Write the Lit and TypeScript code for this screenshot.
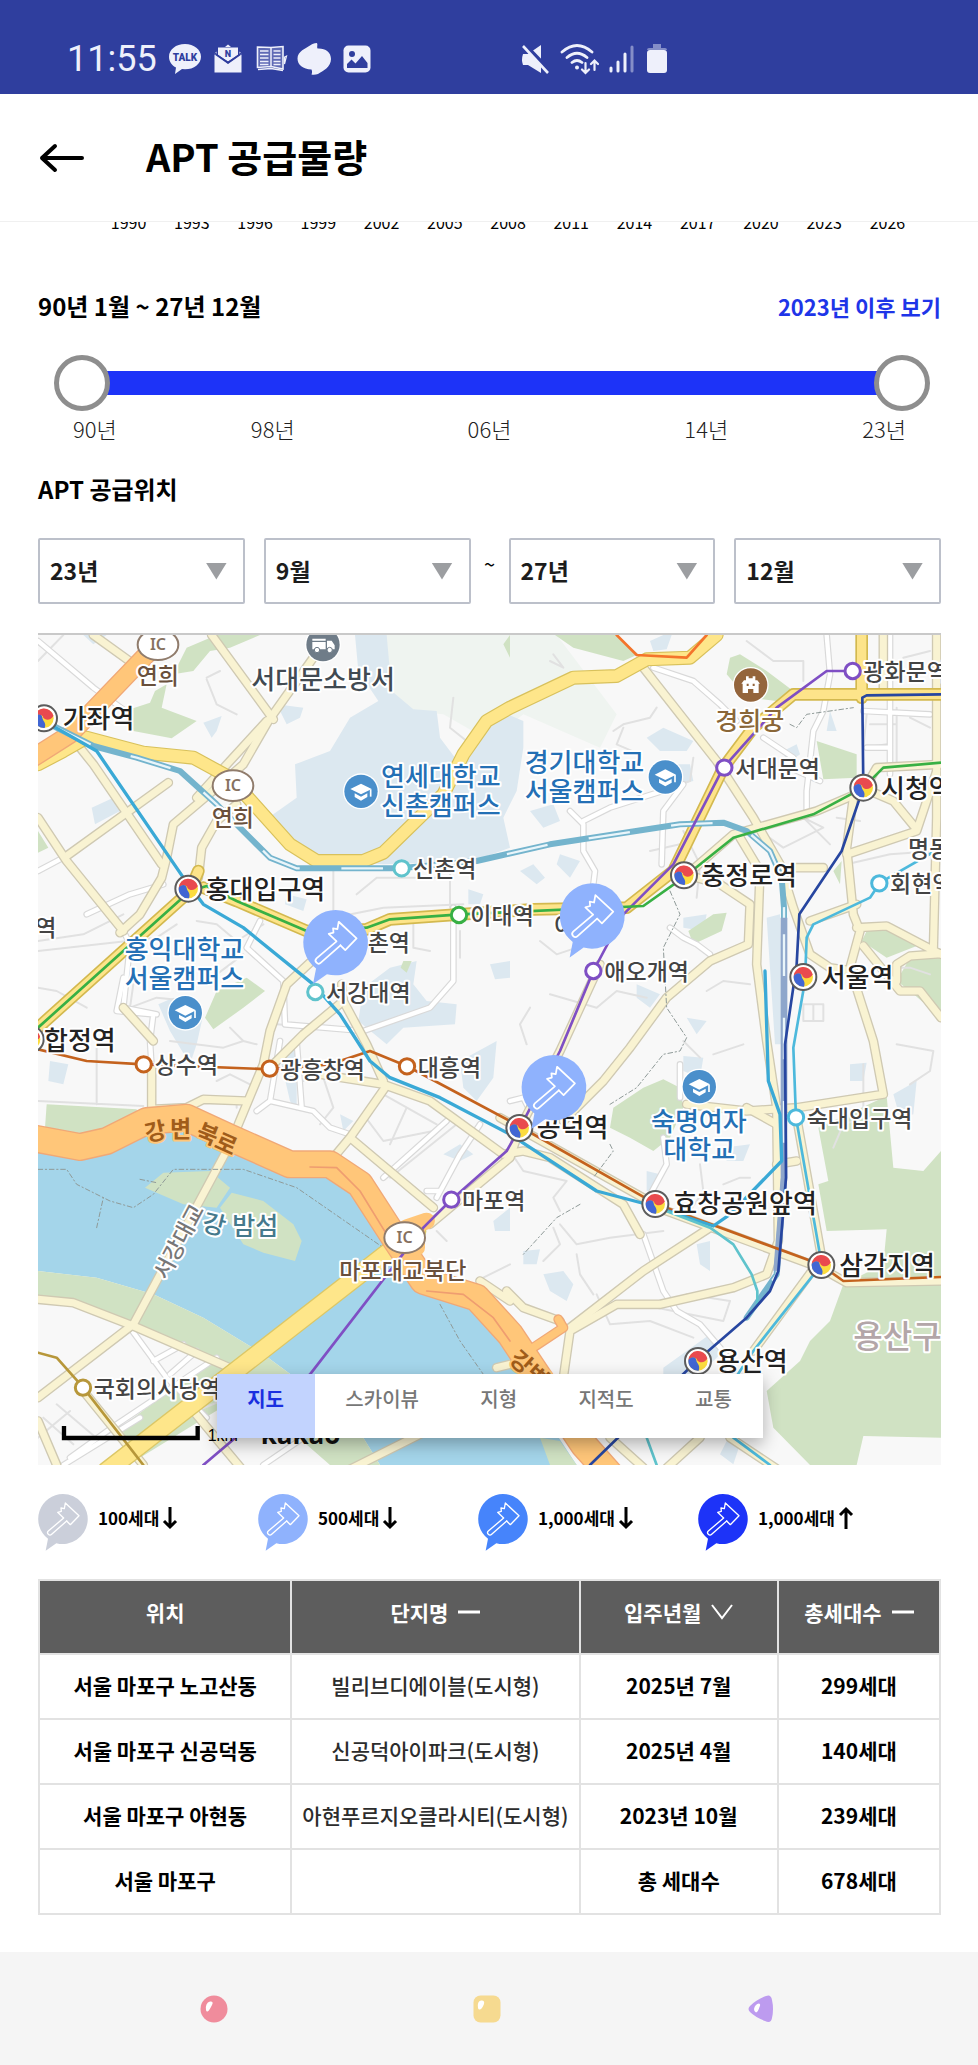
import { LitElement, html, svg, css } from "lit";
import { customElement, property, state } from "lit/decorators.js";
import { classMap } from "lit/directives/class-map.js";

/* ---------- shared shapes ---------- */

const pinShape = (fill: string) => svg`
  <path d="M75 0a75 75 0 1 1 -20 147.500L23 170L30 134.500A75 75 0 0 1 75 0Z" fill=${fill}></path>
  <g fill="none" stroke="#fff" stroke-width="4" stroke-linejoin="round" stroke-linecap="round">
    <path d="M77 72L31 111a7 7 0 0 0 10 10L86 81"></path>
    <path d="M76 71L59 55L70 52L69 42L79 44L82 27L123 65L97 92L86 81"></path>
  </g>`;

@customElement("supply-pin")
class SupplyPin extends LitElement {
  static styles = css`
    :host { display: block; width: 50px; }
    svg { display: block; width: 100%; height: auto; }
  `;
  @property() color = "#8fb2fd";
  render() {
    return html`<svg viewBox="0 0 150 171" aria-hidden="true">${pinShape(this.color)}</svg>`;
  }
}

/* ---------- map ---------- */

type Road = [kind: string, d: string];

const areas: Road[] = [
  ["mist", "M1060 12H1580L1760 250L1710 350L1480 250L1380 330L1240 250L1090 235Z"],
  ["campus", "M975 12H1070L1085 180L1150 235L1220 240L1230 320L1290 400L1370 300L1410 240L1480 270L1480 350L1460 480L1420 560L1440 650L1330 690L1060 700L900 690L800 640L715 560L800 500L795 400L900 360L960 260L1045 210L985 120Z"],
  ["campus", "M740 220L820 230L810 260L770 280ZM520 275L575 255L560 300L545 320ZM185 530L250 500L270 540L195 580ZM160 12H230L190 40ZM770 790L830 805L820 840L765 820ZM1315 775L1360 790L1350 820H1315ZM1000 1070L1080 1010L1160 990L1150 1060L1190 1110L1280 1120L1275 1180L1120 1190L1070 1240L985 1170ZM385 1120L430 1100L520 1150L500 1240L480 1300L420 1200ZM1380 1000L1440 990V1040L1395 1045Z"],
  ["campus", "M1860 30L1900 12H1925L1910 55L1870 60ZM1850 320L1900 290L1990 330L1970 360H1890ZM1940 400H1980L1990 450L1950 460ZM2260 360L2300 340L2310 370L2270 400ZM1580 700L1590 670L1650 690L1620 740ZM1470 720L1510 700L1545 740L1520 760ZM1500 540L1570 520L1590 570L1540 590ZM1960 860L2030 850L2020 900L1960 890ZM1820 1060L1890 1090L1860 1130L1820 1100ZM1970 1160L2030 1170L2000 1210ZM2400 240L2420 300L2390 300ZM2210 860L2250 850L2262 1240H2235ZM2590 1390L2660 1350L2650 1450L2610 1460ZM2460 1300L2510 1295L2500 1350H2460ZM1960 1275L2020 1280L2010 1340L1960 1320ZM1540 1930L1600 1920L1630 1960L1610 2010L1560 1980ZM2000 1840L2040 1830L2040 1920L2010 1900ZM1480 1860L1530 1855L1520 1900H1480ZM1900 2210L2040 2110L2080 2160L2000 2240H1900ZM1850 1620L1890 1630L1880 1680H1850Z"],
  ["campus", "M60 1290L115 1300L100 1360L55 1350ZM750 1280L800 1250L800 1440L780 1410ZM1240 1570L1290 1540L1330 1570L1290 1590ZM1390 1770L1440 1730V1800H1395ZM1290 1290L1400 1230L1390 1340L1340 1410L1300 1370ZM930 1450L970 1470L940 1500ZM2080 1550L2160 1540L2140 1590L2090 1590ZM2090 2430L2130 2440L2110 2500L2070 2470Z"],
  ["park", "M430 130L470 50L560 12H690L600 50L540 60L490 120ZM360 215L375 180L410 160L395 230L500 270L425 322L310 300L300 235ZM24 600L55 650L24 665ZM560 1080L650 1040L705 1080L640 1130L550 1195L525 1160ZM1120 990L1145 990L1130 1025L1112 1010ZM1440 12L1420 40L1440 80Z"],
  ["park", "M1575 12H1760L1825 70L1780 90L1630 50ZM2100 80L2130 70L2210 120L2290 180L2240 210L2150 200L2090 130ZM2360 330L2480 370V440L2380 445ZM2050 850L2090 845L2075 900L1990 940L1975 900ZM2510 900L2570 895L2660 945L2570 980L2495 930ZM2600 1050L2640 980L2733 975V1160L2640 1080ZM2410 720L2435 690L2430 760Z"],
  ["park", "M2365 1490L2570 1395L2590 1610L2680 1620L2733 1560V2420L2500 2415L2480 2502H2340L2230 2390L2210 2280L2310 2190L2340 2130L2400 2070L2440 1960L2560 1900L2570 1795L2390 1800L2365 1660L2395 1650ZM1840 1370L1900 1345L1950 1370L1960 1430L1920 1520L1870 1560L1800 1520L1740 1490L1750 1430Z"],
  ["park", "M50 1420L320 1435L330 1500L200 1540L45 1490Z"],
  ["water", "M24 1540L150 1585L330 1500H500L600 1560L780 1620L920 1620L1060 1840L1150 1960L1340 2030L1440 2160L1560 2380L1640 2502H1050L1000 2420L850 2280L700 2170L520 2060L370 1990L200 1940L24 1920Z"],
  ["park", "M24 1920L200 1940L370 1990L520 2060L700 2170L850 2280L1000 2420L1050 2502H900L760 2380L600 2210L400 2110L200 2030L24 2000Z"],
  ["park", "M270 2390L540 2190L610 2200L640 2290L330 2480ZM1530 2420L1560 2502H1640L1590 2430Z"],
  ["park", "M345 1670L400 1625L540 1620L600 1670L560 1730L460 1720ZM570 1730L605 1685L700 1710L790 1780L815 1830L795 1890L700 1865L640 1840Z"],
];

const lanes = [
  "M24 90L100 12M70 70L24 40M530 140L570 120M530 145L560 220L620 250M1270 200L1260 290L1310 330M910 700V860M1260 710V830M910 860L1060 830L1300 820M980 790L1040 740H1260M1150 860V950L1200 960M1290 900V980",
  "M24 930L160 910L280 850M500 870L560 880L620 930L700 880M440 880L380 920L24 960M310 1060L300 1130L380 1100L480 1110M24 1070L80 1080L170 1130M520 1060L640 970M600 1190L640 1230L680 1240M740 1180L880 1190",
  "M1750 300L1780 280L1860 260L1880 230M1780 290L1760 340L1830 370M1990 380L1980 450L1900 480M1960 600L2010 700L2000 800M1860 660L1950 640M2190 600L2260 650L2380 590L2320 560L2400 640M2150 30L2230 90H2320V150M1570 70L1600 110L1560 90",
  "M1530 930L1580 970L1640 950M1560 1090L1700 1130L1760 1080L1850 1100M1500 1130L1470 1180L1490 1240M2030 1080L2080 1050L2160 1060M2320 1120H2380V1170H2320ZM2350 1120V1170M2540 1040L2600 1010L2640 1010L2700 1030",
  "M420 1230L580 1250L640 1230M200 1250V1420M24 1410L340 1425M560 1350L600 1330L660 1360M620 1400V1430M820 1350L850 1300M880 1340L910 1430L870 1480M1000 1450L1060 1530L1210 1500M1060 1390L1220 1480M1080 1540L1130 1430M1080 1640L1280 1480M1220 1800L1250 1830M1360 1940L1440 1900",
  "M1440 1560L1480 1620L1610 1650L1570 1700L1590 1740M1590 1780L1640 1840L1740 1820L1900 1800M1540 1890L1590 1840L1570 1790M1640 1870L1650 1930L1690 1990M1700 1990L1740 2080L1860 2070L1990 2120M1880 2030L2080 2070L2100 2010L1970 1990M2010 1600L2020 1680L1980 1740M2080 1660L2130 1640H2160",
  "M2410 1550L2440 1480L2500 1460V1300M2600 1240L2710 1260L2700 1320L2640 1360M2050 1270L2140 1240M2010 1280L1960 1230M40 2360L130 2440M24 2420L120 2340M80 2320L210 2430M330 2470L420 2400M500 2340L620 2290",
  "M2510 250L2500 350L2570 340M2600 230V400M2520 280H2600M2540 130L2600 100M2640 260L2700 290M2620 80L2700 60M2450 700L2580 670L2720 660M2420 560L2490 570",
];

const streets: string[] = [
  "M24 30L190 170L300 250", "M24 720L100 680", "M170 850L300 790L400 760M280 900L300 940L280 1130L380 1150",
  "M690 870L650 950L760 1050L765 1180L1000 1200L1200 1130L1270 1050V830",
  "M280 1040L260 1140L370 1150L360 1230L365 1310", "M750 1230L720 1410L680 1440M800 1230L815 1430M720 1410L850 1440L900 1490L960 1510",
  "M1060 1640L1250 1470M1220 1700L1290 1570L1350 1480M1230 1680L1190 1680",
  "M1870 110L1990 150L2070 220L2120 270M2200 320L2290 380L2280 410L2370 450M2390 12L2400 130L2380 240L2350 300L2330 480V540",
  "M1620 540L1660 580L1660 660L1695 720L1690 760M1660 570L1740 530L1960 460L1930 500L1900 540L1895 700",
  "M2580 12V430M2500 240L2700 250M2510 350H2580", "M1920 890L1960 920L2000 940L2040 970",
  "M1850 1710L1910 1600L1900 1520M1840 1810L1900 1980L1940 2040L2010 2080L2070 2150L2110 2200",
  "M1440 1410L1480 1400L1500 1440", "M300 2090L410 2240L530 2360M370 2190L460 2140M420 2230L500 2160M120 2480L260 2380L560 2180M100 2502L330 2360",
  "M1950 1400L1950 1300M700 2502L820 2420",
];

const avenues: string[] = [
  "M190 12L305 95", "M545 12L730 265", "M850 80L715 270L640 400L560 470L430 580L410 680L395 740L330 850L270 905",
  "M710 270L600 390L500 500", "M150 350L190 400L395 700", "M110 675L415 455", "M24 560L110 690L280 900", "M620 520L560 570L515 650L505 740",
  "M840 995L770 1060L720 1200L700 1300L600 1540L310 2080L24 2300", "M935 1060L940 1110L820 1210L720 1310M940 1110L1010 1240L1060 1350",
  "M24 2005L130 2015L310 2085L610 2215", "M365 1310V1435L470 1430L520 1405L650 1410",
  "M870 1330L1060 1360L1200 1410L1420 1570L1480 1560L1560 1580L1780 1720L1830 1810", "M1065 1370L960 1520L910 1580M960 1520L1210 1730",
  "M60 260L24 240M370 1230L280 1130",
  "M1840 110L2060 390L2170 560L2250 700L2290 830L2340 970L2400 1010L2470 1020", "M2000 740L2070 760L2160 820L2155 940L2040 990L1910 1100L1800 1250L1720 1350L1600 1470",
  "M2130 620L2190 720L2180 1000L2210 1230L2240 1430L2245 1830L2210 1930L2110 1970L1890 2020L1760 2020L1620 2100L1600 2240",
  "M2470 500L2450 650L2470 850L2490 900L2460 1010L2530 1230L2560 1390L2300 1430L2150 1440L1970 1420",
  "M2150 1430L2240 1480M2300 1590L2240 1600", "M2340 870L2480 820M2290 710H2380M2450 670L2660 600L2720 420M2520 480L2590 510L2660 595",
  "M2720 12V560L2710 960M2560 12V190M2480 890L2570 885L2733 970M2500 945L2610 1080L2670 1080L2733 1160M2600 1050V1000L2640 975L2733 968",
  "M1960 740L2110 610L2360 540L2500 480L2540 410L2733 400", "M1410 1460L1910 1740L2370 1910L2450 1955L2733 1950",
  "M2040 1790L1840 1920L1620 2090", "M2300 1460L2375 1880L2170 2160", "M1710 1000L1590 1260L1470 1490L1440 1580L1200 1780",
  "M24 2370L80 2502M160 2280L340 2502M490 2340L640 2520M950 2520L1190 2400", "M2010 2420L1900 2520M1740 2420L1840 2510M2100 2420L2250 2520",
  "M1350 1950L1440 2010M1430 1980L1480 2030L1590 2070M1440 2200L1400 2210",
];

const majors: string[] = [
  "M24 400L100 360L170 320L340 365L490 380L600 440L780 640L860 690L1000 690L1060 665L1240 490L1300 370L1370 270L1440 230L1630 140L1760 135L1850 85L1980 80L2060 12",
];
const boulevards: string[] = [
  "M24 1190L480 780L505 720", "M520 770L620 810L830 900L1010 895L1080 865L1290 850L1510 835L1790 830L1930 720L2080 410L2170 290L2290 190L2733 190", "M2495 12V200",
];
const lines: Road[] = [
  ["brown", "M24 1255L170 1290L340 1300L720 1315L900 1300L1020 1260L1130 1305L1440 1470L1880 1720L2370 1900L2440 1950L2733 1938"],
  ["purple", "M2460 120H2390L2240 230L2080 410L1930 700L1780 850L1690 1020L1590 1260L1470 1490L1430 1560L1260 1710L1180 1790L840 2230L520 2502"],
  ["green", "M24 1190L480 780L530 765L620 810L830 900L1010 890L1080 865L1290 850L1840 825L1960 740L2110 620L2350 550L2500 470L2560 410L2733 395"],
  ["flame", "M1760 12L1820 72L1970 80L2030 12"],
  ["gold", "M24 2165L80 2180L160 2270L340 2502"],
  ["azure", "M60 280L200 360L460 740L520 820L640 890L850 1060L930 1150L1020 1290L1080 1340L1230 1400L1440 1510L1700 1680L1870 1725L2050 1785L2100 1750L2255 1590L2250 1450L2215 1350L2205 1020"],
  ["teal", "M1870 1725L2040 1790L2110 1840L2165 1930L2182 1980V2020M1850 2420L1880 2502"],
  ["sky", "M2733 650L2550 755L2520 800L2350 880L2330 920L2325 1050L2290 1250L2298 1460L2375 1900L2170 2160L2090 2280M2110 2420L2220 2502"],
  ["navy", "M2733 190L2510 193L2497 200L2500 470L2435 660L2308 850L2300 1000L2265 1240L2268 1640L2245 1920L2220 1980L2150 2060L2000 2190L1680 2502"],
];
const rail = "M70 285L190 345L320 380L450 420L560 520L720 680L800 712H1110L1340 690L1560 640L1950 580L2080 575L2150 600L2220 660L2255 740L2262 830V1640L2240 1930L2150 2060";

const stops: [string, number, number][] = [
  ["teal", 1115, 712], ["green", 1287, 852], ["teal", 856, 1083], ["purple", 2468, 120], ["purple", 2083, 410],
  ["sky", 2548, 757], ["purple", 1690, 1020], ["brown", 341, 1300], ["brown", 719, 1313], ["brown", 1131, 1306],
  ["purple", 1264, 1706], ["sky", 2298, 1459], ["gold", 159, 2270],
];
const hubs: [number, number][] = [
  [42, 262], [475, 773], [1962, 733], [2500, 470], [2320, 1038], [1468, 1491], [1876, 1719], [2374, 1902], [2004, 2190], [2, 1225],
];

type Label = [cls: string, x: number, y: number, text: string];
const labels: Label[] = [
  ["hub", 98, 290, "가좌역"], ["hub", 527, 803, "홍대입구역"], ["hub", 42, 1257, "합정역"],
  ["hub", 2014, 763, "충정로역"], ["hub", 2553, 500, "시청역"], ["hub", 2375, 1067, "서울역"],
  ["hub", 1520, 1519, "공덕역"], ["hub", 1930, 1747, "효창공원앞역"], ["hub", 2428, 1932, "삼각지역"], ["hub", 2058, 2219, "용산역"],
  ["stop", 1149, 737, "신촌역"], ["stop", 1321, 879, "이대역"], ["stop", 1013, 959, "촌역"], ["stop", 888, 1111, "서강대역"],
  ["stop", 2500, 147, "광화문역"], ["stop", 2116, 439, "서대문역"], ["stop", 2634, 677, "명동역"], ["stop", 2580, 784, "회현역"],
  ["stop", 1723, 1048, "애오개역"], ["stop", 1573, 908, "아"], ["stop", 374, 1327, "상수역"], ["stop", 751, 1341, "광흥창역"],
  ["stop", 1163, 1334, "대흥역"], ["stop", 1296, 1734, "마포역"], ["stop", 2330, 1487, "숙대입구역"], ["stop", 191, 2297, "국회의사당역"],
  ["stop", 16, 914, "역"],
  ["place", 664, 174, "서대문소방서"], ["school", 1053, 465, "연세대학교"], ["school", 1053, 552, "신촌캠퍼스"],
  ["school", 284, 984, "홍익대학교"], ["school", 284, 1070, "서울캠퍼스"], ["school", 1484, 424, "경기대학교"], ["school", 1484, 510, "서울캠퍼스"],
  ["school", 1863, 1500, "숙명여자"], ["school", 1900, 1585, "대학교"],
  ["palace", 2056, 296, "경희궁"], ["exit", 320, 160, "연희"], ["exit", 545, 584, "연희"], ["exit", 928, 1943, "마포대교북단"],
  ["isle", 607, 1812, "밤섬"], ["district", 2470, 2150, "용산구"],
];

@customElement("supply-map")
class SupplyMap extends LitElement {
  static styles = css`
    :host { display: block; position: relative; border-top: 2px solid #c9c9c9; }
    .canvas { display: block; width: 100%; height: auto; background: #f8f8f8; overflow: hidden; }
    .line { fill: none; stroke-linejoin: round; stroke-linecap: round; }
    .mist { fill: #eff4f0; }
    .campus { fill: #dce8f0; }
    .park { fill: #d0e2c3; }
    .water { fill: #a4d5ea; }
    .lane { stroke: #e1e1e1; stroke-width: 6; }
    .street-edge { stroke: #d9d9d9; stroke-width: 20; }
    .street { stroke: #fff; stroke-width: 13; }
    .avenue-edge { stroke: #cfc9b2; stroke-width: 29; }
    .avenue { stroke: #f9f3d2; stroke-width: 21; }
    .boulevard-edge { stroke: #d3b94f; stroke-width: 38; }
    .boulevard { stroke: #fde48a; stroke-width: 28; }
    .major-edge { stroke: #d8c15c; stroke-width: 42; }
    .major { stroke: #fee68a; stroke-width: 35; }
    .bridge-edge { stroke: #dcc767; stroke-width: 58; }
    .bridge { stroke: #fee68a; stroke-width: 50; }
    .express-edge { stroke: #f0a877; stroke-width: 84; }
    .express { stroke: #ffc679; stroke-width: 76; }
    .ramp-edge { stroke: #f0a877; stroke-width: 58; }
    .ramp { stroke: #ffc679; stroke-width: 50; }
    .border { stroke: #8f9a98; stroke-width: 3; stroke-dasharray: 14 8 4 8; }
    .rail { stroke: #74b4cd; stroke-width: 18; }
    .rail-dash { stroke: #e9f5fa; stroke-width: 7; stroke-dasharray: 125 125; stroke-linecap: butt; }
    .yard { stroke: #8ea6cb; stroke-width: 20; stroke-linecap: butt; }
    .track { stroke-width: 8; }
    .brown { stroke: #c4621d; }
    .purple { stroke: #7f4fc4; }
    .green { stroke: #38b044; }
    .flame { stroke: #f4742b; }
    .gold { stroke: #b7973a; }
    .azure { stroke: #3aa9d6; stroke-width: 10; }
    .teal { stroke: #5fc3cc; }
    .sky { stroke: #4db9dc; }
    .navy { stroke: #2746a0; }
    .stop-dot { fill: #fff; stroke-width: 9; }
    .label { font-family: "Noto Sans CJK KR", sans-serif; font-weight: 500; paint-order: stroke; stroke: #fff; stroke-width: 12; stroke-linejoin: round; }
    .hub { font-size: 78px; fill: #222; }
    .stop { font-size: 69px; fill: #444; }
    .place { font-size: 78px; fill: #414a52; }
    .school { font-size: 78px; fill: #2470b5; }
    .palace { font-size: 75px; fill: #8a6738; }
    .exit { font-size: 69px; fill: #69503c; }
    .isle { font-size: 75px; fill: #45798c; }
    .district { font-size: 96px; fill: #b3a6a8; }
    .bridge-name { font-size: 66px; fill: #777; }
    .road-name { font-size: 69px; font-weight: 700; fill: #a05c1a; stroke: #ffc679; }
    .ic { font-family: "Noto Sans", sans-serif; font-weight: 600; font-size: 48px; fill: #86715f; text-anchor: middle; }
    .scale { font-family: "Liberation Sans", sans-serif; font-size: 48px; fill: #000; }
    .brand { font-family: "Open Sans", sans-serif; font-weight: 700; font-size: 78px; fill: #111; }
    .types {
      position: absolute; left: 50%; bottom: 27px; transform: translateX(-50%);
      display: flex; width: 546px; max-width: 96%; background: #fff;
      box-shadow: 0 6px 16px rgba(0, 0, 0, 0.3);
    }
    .type {
      flex: 1 1 auto; height: 64px; margin: 0; padding: 0 28px 15px; border: 0; background: none;
      font: 500 20px/24px "Noto Sans CJK KR", sans-serif; color: #777; white-space: nowrap;
    }
    .type.on { background: #c2d3fe; color: #1a2fe0; font-weight: 700; }
  `;

  @state() private active = "지도";

  private cased(name: string, ds: string[]) {
    return svg`
      ${ds.map((d) => svg`<path class=${"line " + name + "-edge"} d=${d}></path>`)}
      ${ds.map((d) => svg`<path class=${"line " + name} d=${d}></path>`)}`;
  }

  private badge(x: number, y: number, color: string, art: unknown) {
    return svg`<g transform="translate(${x} ${y})">
      <circle r="54" fill="#fff"></circle><circle r="50" fill=${color}></circle>${art}</g>`;
  }

  private cap(x: number, y: number) {
    return this.badge(x, y, "#4a8fcb", svg`
      <path d="M-32 -7L0 -23L32 -7L0 9Z" fill="#fff"></path>
      <path d="M-19 6L0 16L19 6V17L0 28L-19 17Z" fill="#fff"></path>
      <path d="M29 -6V16" stroke="#fff" stroke-width="5"></path>`);
  }

  private ic(x: number, y: number) {
    return svg`<ellipse cx=${x} cy=${y} rx="61" ry="46" fill="#fff" stroke="#907c6c" stroke-width="6"></ellipse>
      <text class="ic" x=${x} y=${y + 17}>IC</text>`;
  }

  private hub(x: number, y: number) {
    return svg`<g transform="translate(${x} ${y})">
      <circle r="39" fill="#fff" stroke="#5c5c5c" stroke-width="6"></circle>
      <circle r="29" fill="#fbdc3f"></circle>
      <path d="M-29 -3A29 29 0 0 1 28 -8C20 4 9 -6 0 -3C-8 -12 -18 -14 -29 -3Z" fill="#e94a4f"></path>
      <path d="M-29 -3C-20 -15 -6 -13 -5 -2C-4 8 8 12 2 29A29 29 0 0 1 -29 -3Z" fill="#4166d3"></path>
      <path d="M28 -8C22 6 4 8 -3 -3C-3 -12 6 -12 10 -12Z" fill="#e94a4f"></path></g>`;
  }

  render() {
    const pins: [number, number][] = [[819, 837], [1589, 757], [1474, 1272]];
    return html`
      <svg class="canvas" viewBox="24 12 2709 2490" role="img" aria-label="APT 공급위치 지도">
        ${areas.map(([kind, d]) => svg`<path class=${kind} d=${d}></path>`)}
        ${lanes.map((d) => svg`<path class="line lane" d=${d}></path>`)}
        ${this.cased("street", streets)}
        ${this.cased("avenue", avenues)}
        <path class="line border" d="M24 1615H110L140 1660L240 1710L310 1730L370 1690L430 1615H640L800 1670L1060 1850M1230 2020L1290 2130L1360 2230M200 1790L220 1700M330 1645L380 1655M2280 280L2300 290L2330 250L2400 240L2470 230M1920 780L1950 850L1900 950L1910 1130L1970 1220L1950 1260L1900 1270L1820 1370L1740 1420M1740 1540L1750 1560L1690 1640M1650 1720L1580 1760L1480 1870"></path>
        ${this.cased("bridge", ["M1160 1800L1060 1875L610 2225L230 2520"])}
        ${this.cased("major", majors)}
        ${this.cased("boulevard", boulevards)}
        ${this.cased("ramp", ["M10 380L120 310L370 50"])}
        <path class="line" stroke="#f0a877" stroke-width="30" d="M1510 2150L1600 2090L1585 2065"></path>
        ${this.cased("express", ["M10 1522L150 1548L230 1530L350 1470L470 1460L600 1520L780 1600L900 1600L990 1660L1100 1830L1180 1950L1340 2000L1440 2110L1500 2200L1660 2440L1740 2530"])}
        <path class="line ramp" d="M1130 1790L1190 1770M1160 1850V1800"></path>
        <path class="line" stroke="#ef9d70" stroke-width="5" d="M840 1608L920 1610L990 1680L1070 1810M1190 1980L1300 1990L1390 2060L1440 2130M1500 2240L1600 2400"></path>
        <path class="line" stroke="#ffc679" stroke-width="22" d="M1500 2156L1600 2090L1585 2065"></path>

        <path class="line rail" d=${rail}></path>
        <path class="line rail-dash" d=${rail}></path>
        <path class="line yard" d="M2262 860V1640L2240 1920"></path>
        <path class="line rail-dash" d="M2262 910V1640"></path>
        ${lines.map(([kind, d]) => svg`<path class=${"line track " + kind} d=${d}></path>`)}

        ${stops.map(([kind, x, y]) => svg`<circle class=${"stop-dot " + kind} cx=${x} cy=${y} r="23"></circle>`)}
        ${hubs.map(([x, y]) => this.hub(x, y))}
        ${this.ic(384, 41)} ${this.ic(609, 464)} ${this.ic(1124, 1820)}
        ${this.cap(993, 481)} ${this.cap(466, 1145)} ${this.cap(1906, 438)} ${this.cap(2008, 1367)}
        ${this.badge(879, 41, "#6f7c88", svg`
          <path d="M-32 -18H8V-12H-32ZM-32 -8H8V14H-32ZM12 -12H26L35 2V14H12Z" fill="#fff"></path>
          <circle cx="-18" cy="16" r="8" fill="#fff" stroke="#6f7c88" stroke-width="3"></circle>
          <circle cx="20" cy="16" r="8" fill="#fff" stroke="#6f7c88" stroke-width="3"></circle>`)}
        ${this.badge(2162, 162, "#94653c", svg`
          <path d="M-14 -26H-6V-20H6V-26H14V-14H20L28 -4H24V24H8V12H-8V24H-24V-4H-28L-20 -14H-14Z" fill="#fff"></path>
          <path d="M-12 -4H-6V3H-12ZM6 -4H12V3H6Z" fill="#94653c"></path>`)}

        ${labels.map(([kind, x, y, text]) => svg`<text class=${"label " + kind} x=${x} y=${y}>${text}</text>`)}
        <text class="label isle" transform="translate(512 1798) rotate(14)">강</text>
        <text class="label bridge-name" transform="translate(410 1950) rotate(-62)">서강대교</text>
        <text class="label road-name" transform="translate(350 1532) rotate(-12)">강</text>
        <text class="label road-name" transform="translate(420 1518)">변</text>
        <text class="label road-name" transform="translate(494 1520) rotate(22)">북</text>
        <text class="label road-name" transform="translate(550 1548) rotate(24)">로</text>
        <text class="label road-name" transform="translate(1434 2190) rotate(42)">강변</text>

        ${pins.map(([x, y]) => svg`<g transform="translate(${x} ${y}) scale(1.307)">${pinShape("#8fb2fd")}</g>`)}

        <path d="M102 2385V2421H503V2385" fill="none" stroke="#000" stroke-width="13"></path>
        <text class="scale" x="533" y="2430">1km</text>
        <text class="brand" x="692" y="2440">kakao</text>
      </svg>
      <div class="types" role="group" aria-label="지도 종류">
        ${["지도", "스카이뷰", "지형", "지적도", "교통"].map((t) => html`
          <button type="button" class=${classMap({ type: true, on: t === this.active })}
            aria-pressed=${t === this.active ? "true" : "false"} @click=${() => (this.active = t)}>${t}</button>`)}
      </div>`;
  }
}

/* ---------- page ---------- */

const range = (from: number, to: number) => Array.from({ length: to - from + 1 }, (_, i) => from + i);

@customElement("app-root")
class AppRoot extends LitElement {
  static styles = css`
    :host { display: block; background: #fff; color: #000; font-family: "Noto Sans CJK KR", sans-serif; }
    *, *::before, *::after { box-sizing: border-box; }
    .status { display: flex; align-items: center; height: 94px; padding: 23px 66px 0 67px; background: #2f3e9e; color: #eef0fb; }
    .time { width: 101px; font: 400 36px/42px Roboto, sans-serif; }
    .tray { display: flex; align-items: center; gap: 9px; }
    .system { display: flex; align-items: center; gap: 10px; margin-left: 147px; }
    .status svg { display: block; height: 34px; width: auto; flex: none; }
    .glyph { font-family: Roboto, sans-serif; font-weight: 900; fill: #2f3e9e; text-anchor: middle; }

    .head { display: flex; align-items: center; gap: 60px; height: 128px; padding: 0 38px; border-bottom: 1px solid #f0f0f0; }
    .back { display: block; padding: 0; border: 0; background: none; }
    .back svg { display: block; width: 48px; height: 32px; }
    .title { margin: 0; padding-bottom: 4px; font-size: 38px; line-height: 56px; font-weight: 700; }

    .page { padding: 0 37px 37px 38px; }
    .axis { display: flex; align-items: flex-end; height: 12px; margin: 0 22px 0 59px; overflow: hidden; font-size: 16px; line-height: 24px; }
    .axis span { flex: 1; text-align: center; }
    .period { display: flex; justify-content: space-between; align-items: center; margin-top: 54px; font-size: 24px; line-height: 36px; font-weight: 700; }
    .since { font-size: 22px; color: #1e35e8; text-decoration: none; }

    .slider { display: grid; align-items: center; height: 56px; margin: 31px 11px 0 16px; }
    .slider > * { grid-area: 1 / 1; }
    .bar { height: 24px; margin: 0 28px; background: #1d33f8; }
    .range { appearance: none; width: 100%; height: 56px; margin: 0; background: none; pointer-events: none; }
    .range::-webkit-slider-thumb { appearance: none; width: 56px; height: 56px; border: 5px solid #8e8e8e; border-radius: 50%; background: #fff; pointer-events: auto; }
    .ticks { display: grid; grid-template-columns: 1fr 2fr 2fr 2fr 1fr; margin: 1px 18px 0; font-size: 22px; line-height: 32px; font-weight: 300; color: #222; text-align: center; }
    .ticks span:first-child { text-align: left; padding-left: 17px; }
    .ticks span:last-child { text-align: right; padding-right: 17px; }

    .subtitle { margin: 27px 0 31px; font-size: 24px; line-height: 36px; font-weight: 700; }
    .selects { display: grid; grid-template-columns: 11fr 12fr 38px 11fr 12fr; margin-bottom: 29px; }
    .selects .pick + .pick { margin-left: 19px; }
    .tilde { text-align: center; font-size: 20px; line-height: 52px; }
    .pick { display: grid; align-items: center; }
    .pick > *, .pick::after { grid-area: 1 / 1; }
    .pick::after { content: ""; justify-self: end; width: 21px; height: 17px; margin-right: 18px; background: #9c9ea1; clip-path: polygon(0 0, 100% 0, 50% 100%); pointer-events: none; }
    .choice { appearance: none; width: 100%; height: 66px; padding: 0 10px 3px; border: 2px solid #bcc0ca; border-radius: 2px; background: #fff; color: #1c1c1c; font: 700 23px/32px "Noto Sans CJK KR", sans-serif; }

    .legend { display: grid; grid-template-columns: repeat(4, 1fr); margin: 29px 0 0; padding: 0 23px 0 0; list-style: none; }
    .entry { display: flex; align-items: center; gap: 10px; font-size: 17px; line-height: 24px; font-weight: 700; height: 57px; }
    .entry-text { display: flex; align-items: center; gap: 3px; padding-bottom: 9px; }
    .entry svg { display: block; width: 16px; height: 24px; }

    .table { width: 100%; margin-top: 28px; border-collapse: collapse; table-layout: fixed; text-align: center; font-size: 21px; line-height: 30px; font-weight: 700; }
    .table th, .table td { padding: 0 0 3px; border: 2px solid #e2e2e2; }
    .table th { height: 74px; padding-bottom: 10px; background: #5d5d5d; color: #fff; }
    .table td { height: 65px; }
    .table .name { color: #2c2c2c; font-weight: 500; white-space: nowrap; }
    .w28 { width: 28%; } .w32 { width: 32%; } .w22 { width: 22%; } .w18 { width: 18%; }
    .sort { display: inline-flex; align-items: center; gap: 10px; padding: 0; border: 0; background: none; color: inherit; font: inherit; }
    .sort svg { display: block; width: 22px; height: 18px; }

    .nav { display: grid; grid-template-columns: repeat(3, 1fr); align-items: center; justify-items: center; height: 114px; padding: 0 80px 0 77px; background: #f5f5f5; }
    .nav button { padding: 0; border: 0; background: none; }
    .nav svg { display: block; width: 28px; height: 28px; }
  `;

  private picks = [
    { label: "시작 연도", value: "23년", options: range(15, 27).map((y) => y + "년") },
    { label: "시작 월", value: "9월", options: range(1, 12).map((m) => m + "월") },
    { label: "종료 연도", value: "27년", options: range(15, 27).map((y) => y + "년") },
    { label: "종료 월", value: "12월", options: range(1, 12).map((m) => m + "월") },
  ];
  private legend = [
    { color: "#cbcfda", text: "100세대", up: false },
    { color: "#8fb2fd", text: "500세대", up: false },
    { color: "#4684fb", text: "1,000세대", up: false },
    { color: "#1d33f8", text: "1,000세대", up: true },
  ];
  private rows = [
    ["서울 마포구 노고산동", "빌리브디에이블(도시형)", "2025년 7월", "299세대"],
    ["서울 마포구 신공덕동", "신공덕아이파크(도시형)", "2025년 4월", "140세대"],
    ["서울 마포구 아현동", "아현푸르지오클라시티(도시형)", "2023년 10월", "239세대"],
    ["서울 마포구", "", "총 세대수", "678세대"],
  ];

  private pick(i: number) {
    const p = this.picks[i];
    return html`<div class="pick">
      <select class="choice" aria-label=${p.label}>
        ${p.options.map((o) => html`<option ?selected=${o === p.value}>${o}</option>`)}
      </select>
    </div>`;
  }

  private statusBar() {
    return html`
      <div class="status">
        <div class="time">11:55</div>
        <div class="tray">
          <svg viewBox="0 0 34 34" width="34" fill="#eef0fb">
            <path d="M17 2C8 2 1 7.500 1 14.700c0 4.800 3 8.700 7 10.800L7 32l7-5 3 .3c9 0 16-5.500 16-12.600S26 2 17 2Z"></path>
            <text class="glyph" x="17" y="18.500" font-size="10">TALK</text>
          </svg>
          <svg viewBox="0 0 34 34" width="34" fill="#eef0fb">
            <path d="M14 5l3-2.500L20 5Z"></path>
            <path d="M7 5.500h20v7.500L17 19.500 7 13Z"></path>
            <path d="M3.500 12.500L17 22 30.500 12.500v18h-27Z"></path>
            <path d="M3.500 11.500L5.500 9.500v3.800ZM30.500 11.500l-2-2v3.800Z"></path>
            <path d="M3.500 11L17 20.700 30.500 11" fill="none" stroke="#2f3e9e" stroke-width="1.500"></path>
            <text class="glyph" x="17" y="14.500" font-size="9">N</text>
          </svg>
          <svg viewBox="0 0 34 34" width="34" fill="none" stroke="#eef0fb">
            <path d="M3.500 5L17 5.500 29 4.500V27L17 24.500 3.500 25.500Z" stroke-width="1.600" fill="#eef0fb" fill-opacity=".25"></path>
            <path d="M4 27.500L17 26.500 29 28.500" stroke-width="1.600"></path>
            <path d="M17 5.500V25M6 9h8.500M6 12.500h8.500M6 16h8.500M6 19.500h8.500M19.500 9h7M19.500 12.500h7M19.500 16h7M19.500 19.500h7M6 22.500h8.500M19.500 22.500h7" stroke-width="1.500"></path>
            <path d="M30.500 15v7l2-8Z" stroke-width="1.200"></path>
          </svg>
          <svg viewBox="0 0 34 34" width="34" fill="#eef0fb">
            <path d="M20 1C21 3 19.500 5 20.500 6.500C28 6 34 10 34 17c0 8-8 12-13 15-2 .8-5 1-6.500.5 1-2 .5-4 0-5C6 27 .500 23 .500 16.500.500 9 9 6.500 13 3.500 15 2 17 1 20 1Z"></path>
          </svg>
          <svg viewBox="0 0 34 34" width="34">
            <rect x="3.500" y="3.500" width="27" height="27" rx="5" fill="#eef0fb"></rect>
            <circle cx="12" cy="12" r="3" fill="#2f3e9e"></circle>
            <path d="M7 26v-4l4.500-4.500 4 4L22 14l5.500 7v5Z" fill="#2f3e9e"></path>
          </svg>
        </div>
        <div class="system">
          <svg viewBox="0 0 28 34" width="28">
            <path d="M2 12h5l13-9v28L7 23H2q-2-5 0-11Z" fill="#eef0fb"></path>
            <path d="M3 2L29 29" stroke="#2f3e9e" stroke-width="4"></path>
            <path d="M2 4L27 31" stroke="#eef0fb" stroke-width="2.600"></path>
          </svg>
          <svg viewBox="0 0 40 34" width="40" fill="none" stroke="#eef0fb" stroke-width="2.800" stroke-linecap="round">
            <path d="M3 10Q18-3 33 10M8 15.500Q18 7 28 15.500M13 20.500Q18 16.500 23 20.500"></path>
            <circle cx="18" cy="25.500" r="1" fill="#eef0fb" stroke-width="2"></circle>
            <path d="M26.500 21v9M23 27.500l3.500 3.500 3.500-3.500M35.500 28v-9M32 22l3.500-3.500L39 22" stroke-width="2.200"></path>
          </svg>
          <svg viewBox="0 0 26 34" width="26" stroke="#eef0fb" stroke-width="3" stroke-linecap="round">
            <path d="M2 26v3M9 20v9M16 12v17"></path><path d="M23 5v24" opacity=".45"></path>
          </svg>
          <svg viewBox="0 0 24 34" width="24" fill="#eef0fb">
            <path d="M8 2h8v4h4q2 0 2 2H2q0-2 2-2h4Z" opacity=".45"></path>
            <rect x="2" y="8" width="20" height="23" rx="3"></rect>
          </svg>
        </div>
      </div>`;
  }

  render() {
    const dash = svg`<path d="M0 9H22" stroke="#fff" stroke-width="3"></path>`;
    const chevron = svg`<path d="M1 2L11 15L21 2" stroke="#fff" stroke-width="2" fill="none"></path>`;
    const sortable = (text: string, mark: unknown) =>
      html`<button type="button" class="sort">${text}<svg viewBox="0 0 22 18" aria-hidden="true">${mark}</svg></button>`;
    return html`
      ${this.statusBar()}
      <header class="head">
        <button type="button" class="back" aria-label="뒤로">
          <svg viewBox="0 0 48 32" fill="none" stroke="#000" stroke-width="4" stroke-linecap="round" stroke-linejoin="round">
            <path d="M44 16H4M17 4L4 16L17 28"></path>
          </svg>
        </button>
        <h1 class="title">APT 공급물량</h1>
      </header>
      <main class="page">
        <div class="axis">${range(0, 12).map((i) => html`<span>${1990 + i * 3}</span>`)}</div>
        <div class="period"><span>90년 1월 ~ 27년 12월</span><a class="since" href="#since">2023년 이후 보기</a></div>
        <div class="slider">
          <div class="bar"></div>
          <input class="range" type="range" min="1990" max="2027" value="1990" aria-label="시작 시점" />
          <input class="range" type="range" min="1990" max="2027" value="2027" aria-label="종료 시점" />
        </div>
        <div class="ticks">${["90년", "98년", "06년", "14년", "23년"].map((t) => html`<span>${t}</span>`)}</div>
        <h2 class="subtitle">APT 공급위치</h2>
        <div class="selects">${this.pick(0)}${this.pick(1)}<span class="tilde">~</span>${this.pick(2)}${this.pick(3)}</div>
        <supply-map></supply-map>
        <ul class="legend">
          ${this.legend.map((l) => html`<li class="entry">
            <supply-pin .color=${l.color}></supply-pin>
            <span class="entry-text">${l.text}
              <svg viewBox="0 0 16 24" fill="none" stroke="#000" stroke-width="3" role="img" aria-label=${l.up ? "이상" : "이하"}>
                <path d=${l.up ? "M8 23V3M2 9L8 3L14 9" : "M8 1V21M2 15L8 21L14 15"}></path>
              </svg></span>
          </li>`)}
        </ul>
        <table class="table">
          <thead><tr>
            <th class="w28" scope="col">위치</th>
            <th class="w32" scope="col">${sortable("단지명", dash)}</th>
            <th class="w22" scope="col">${sortable("입주년월", chevron)}</th>
            <th class="w18" scope="col">${sortable("총세대수", dash)}</th>
          </tr></thead>
          <tbody>
            ${this.rows.map((r) => html`<tr>${r.map((c, i) => html`<td class=${i === 1 ? "name" : ""}>${c}</td>`)}</tr>`)}
          </tbody>
        </table>
      </main>
      <nav class="nav">
        <button type="button" aria-label="최근 앱"><svg viewBox="0 0 28 28">
          <circle cx="14" cy="14" r="13.500" fill="#f08c9c"></circle>
          <path d="M6 15Q5 8 10 6.500Q14 6 12 10Q9 16 7.500 16.500Q6.500 17 6 15Z" fill="#fff"></path></svg></button>
        <button type="button" aria-label="홈"><svg viewBox="0 0 28 28">
          <rect x=".5" y=".5" width="27" height="27" rx="7" fill="#f6da90"></rect>
          <path d="M5 13Q4 6 8 5.500Q12 5 11 9Q9 14 7 14.500Q5.500 15 5 13Z" fill="#fff"></path></svg></button>
        <button type="button" aria-label="이전"><svg viewBox="0 0 28 28">
          <path d="M19 1Q24-1 25 5Q27 14 25 23Q24 29 18 26Q8 22 3 17Q0 14 3 11Q9 5 19 1Z" fill="#bd9bef"></path>
          <path d="M7 14Q8 9 12 8.500Q14 9 12.500 12Q11 17 9 17.500Q7 17 7 14Z" fill="#fff"></path></svg></button>
      </nav>`;
  }
}
